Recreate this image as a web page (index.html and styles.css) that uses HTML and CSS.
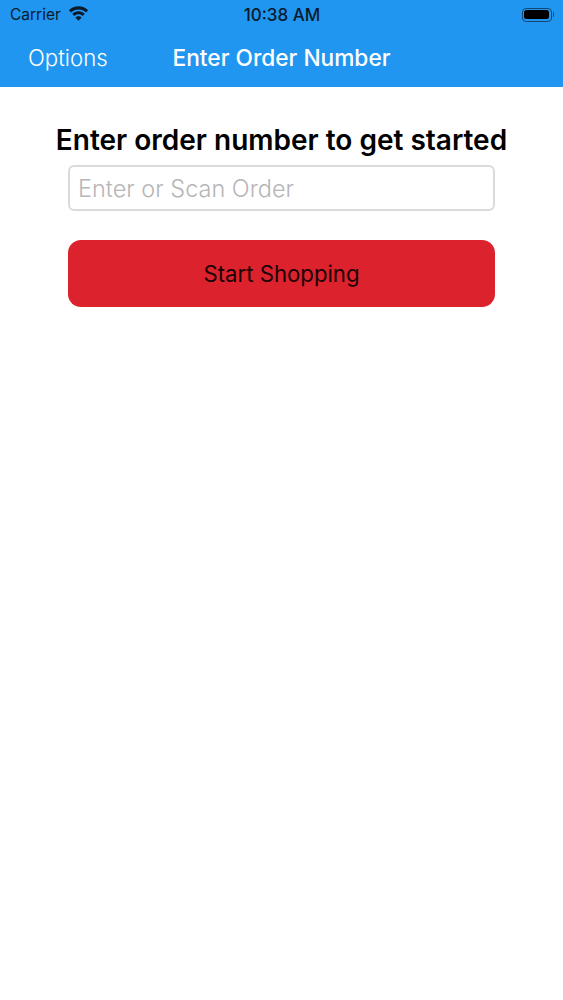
FILE: index.html
```html
<!DOCTYPE html>
<html lang="en">
<head>
<meta charset="utf-8">
<title>Enter Order Number</title>
<link rel="stylesheet" href="styles.css">
</head>
<body>
<header class="top">
  <div class="status">
    <div class="status-left">
      <span>Carrier</span>
      <svg class="wifi" viewBox="0 0 21 15" width="21" height="15">
        <path d="M10.500 3.400c2.900 0 5.500 1.100 7.500 3l2.100-2.200C17.600 1.800 14.200.3 10.500.3S3.400 1.800.9 4.200L3 6.400c2-1.900 4.600-3 7.500-3z"/>
        <path d="M10.500 8.300c1.600 0 3.100.6 4.200 1.700l2.100-2.200c-1.700-1.600-3.900-2.500-6.300-2.500s-4.600.9-6.300 2.500L6.300 10c1.100-1.100 2.600-1.700 4.200-1.700z"/>
        <path d="M10.500 14.700l3.100-3.200c-.8-.8-1.900-1.300-3.100-1.300s-2.300.5-3.100 1.300z"/>
      </svg>
    </div>
    <span class="time">10:38 AM</span>
    <div class="status-right">
      <span class="battery"><span class="battery-fill"></span></span>
      <span class="battery-tip"></span>
    </div>
  </div>
  <nav class="nav">
    <span class="nav-left">Options</span>
    <span class="nav-title">Enter Order Number</span>
  </nav>
</header>
<main class="content">
  <h1 class="heading">Enter order number to get started</h1>
  <input class="order-input" type="text" placeholder="Enter or Scan Order">
  <button class="start" type="button">Start Shopping</button>
</main>
</body>
</html>
```

FILE: styles.css
```css
* { box-sizing: border-box; }
html, body { margin: 0; padding: 0; background: #fff; }
body { font-family: Inter, "Liberation Sans", sans-serif; width: 563px; height: 1000px; overflow: hidden; }
.top { background: #2196f0; height: 87px; display: flex; flex-direction: column; }
.status { height: 29px; position: relative; display: flex; align-items: center; justify-content: space-between; padding: 0 9px 0 10px; color: #0b1a2b; font-size: 15.500px; }
.status-left { display: flex; align-items: center; gap: 7px; }
.wifi { fill: #0b1a2b; margin-top: -3px; }
.time { position: absolute; left: 1px; right: 0; text-align: center; font-weight: 500; font-size: 17px; pointer-events: none; }
.status-right { display: flex; align-items: center; gap: 1px; }
.battery { width: 30px; height: 14px; border: 1px solid #14466f; border-radius: 4px; padding: 1.500px; display: flex; }
.battery-fill { flex: 1; background: #000; border-radius: 2.500px; }
.battery-tip { width: 1.500px; height: 5px; background: #14466f; border-radius: 0 1px 1px 0; }
.nav { flex: 1; position: relative; display: flex; align-items: center; color: #fff; padding: 0 0 0 28px; margin-top: -2px; }
.nav-left { font-weight: 350; font-size: 22.200px; }
.nav-title { position: absolute; left: 0; right: 0; text-align: center; font-weight: 500; font-size: 22.700px; }
.content { display: flex; flex-direction: column; align-items: center; padding-top: 37px; }
.heading { margin: 0; font-size: 28px; line-height: 32px; font-weight: 600; color: #000; text-align: center; white-space: nowrap; }
.order-input { width: 427px; height: 46px; margin-top: 9px; border: 2px solid #dadada; border-radius: 6px; padding: 0 8px; font: 350 23.500px Inter, "Liberation Sans", sans-serif; background: #fff; color: #000; outline: none; }
.order-input::placeholder { color: #b6b6b6; opacity: 1; }
.start { width: 427px; height: 67px; margin-top: 29px; border: 0; border-radius: 13px; background: #dc222c; color: #1a0206; font: 400 22.200px Inter, "Liberation Sans", sans-serif; }
```
